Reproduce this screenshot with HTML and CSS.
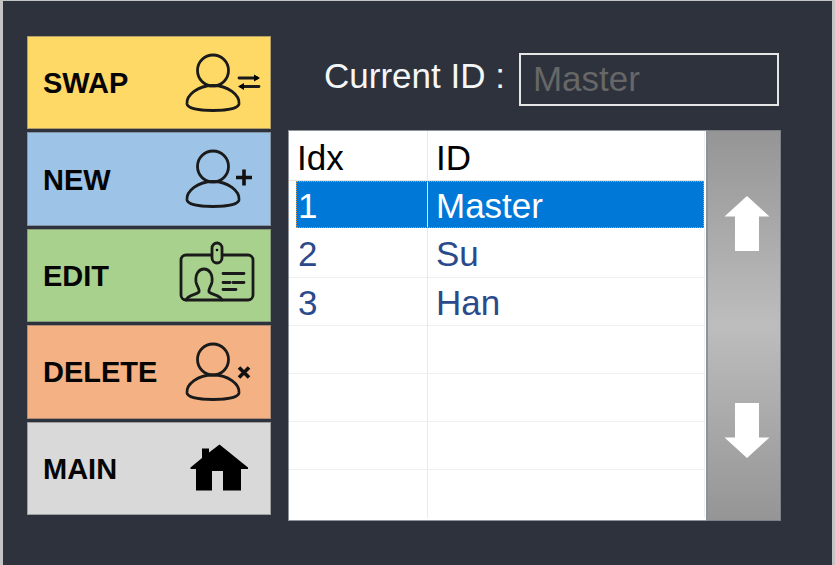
FILE: index.html
```html
<!DOCTYPE html>
<html lang="en">
<head>
<meta charset="utf-8">
<title>User ID</title>
<link rel="stylesheet" href="styles.css">
</head>
<body>
<div class="window">
  <nav class="menu">
    <button class="btn swap"><span>SWAP</span>
      <svg class="icon" viewBox="0 0 84 70"><circle class="ln" cx="36" cy="22.500" r="15.500"/><path class="ln" d="M36 37.500C51 37.500 63 47 62 56C61 61 47 62.500 36 62.500C25 62.500 11 61 10 56C9 47 21 37.500 36 37.500Z"/><path class="ln" d="M62 30H80M64 38.500H82"/><path class="fill" d="M77 26.500L83 30L77 33.500ZM67 35L61 38.500L67 42Z"/></svg>
    </button>
    <button class="btn new"><span>NEW</span>
      <svg class="icon" viewBox="0 0 84 70"><circle class="ln" cx="36" cy="22.500" r="15.500"/><path class="ln" d="M36 37.500C51 37.500 63 47 62 56C61 61 47 62.500 36 62.500C25 62.500 11 61 10 56C9 47 21 37.500 36 37.500Z"/><path class="heavy" d="M59 33.500H75M67 25.500V41.500"/></svg>
    </button>
    <button class="btn edit"><span>EDIT</span>
      <svg class="icon" viewBox="0 0 84 70"><rect class="ln" x="4" y="15" width="72" height="45" rx="5"/><rect class="ln bg-edit" x="35" y="3" width="10" height="20" rx="5"/><circle class="fill" cx="40" cy="10" r="1.300"/><path class="ln" d="M9 60C11 55 19 55 22 52C23 49 20 47 19 42C18 34 22 29 27 29C32 29 36 34 35 42C34 47 31 49 32 52C35 55 43 55 45 60"/><path class="ln" d="M46 33.500H67M46 42.500H53M56 42.500H67M46 49.500H59"/></svg>
    </button>
    <button class="btn del"><span>DELETE</span>
      <svg class="icon" viewBox="0 0 84 70"><circle class="ln" cx="36" cy="22.500" r="15.500"/><path class="ln" d="M36 38C51 38 63 47 62 56C61 61 47 62.500 36 62.500C25 62.500 11 61 10 56C9 47 21 38 36 38Z"/><path class="heavy" d="M62 30.500L72 40.500M72 30.500L62 40.500"/></svg>
    </button>
    <button class="btn main"><span>MAIN</span>
      <svg class="icon" viewBox="0 0 84 70"><path class="fill" d="M42.500 11.500L71 34.500V36H64V57.500H46V38H35V57.500H19V36H13.500V34.500L25 25V15.500H32V19.500Z"/></svg>
    </button>
  </nav>
  <main class="content">
    <div class="current">
      <label class="current-label">Current ID :</label>
      <div class="current-box">Master</div>
    </div>
    <div class="list">
      <div class="grid">
        <div class="row head"><div class="cell idx">Idx</div><div class="cell">ID</div></div>
        <div class="row selected"><div class="cell idx">1</div><div class="cell">Master</div></div>
        <div class="row second"><div class="cell idx">2</div><div class="cell">Su</div></div>
        <div class="row"><div class="cell idx">3</div><div class="cell">Han</div></div>
        <div class="row"><div class="cell idx"></div><div class="cell"></div></div>
        <div class="row"><div class="cell idx"></div><div class="cell"></div></div>
        <div class="row"><div class="cell idx"></div><div class="cell"></div></div>
        <div class="row last"><div class="cell idx"></div><div class="cell"></div></div>
      </div>
      <div class="scroll">
        <svg class="arrow" viewBox="0 0 46 56"><path d="M23 0L45.500 20.500H35V55H11V20.500H0.500Z"/></svg>
        <svg class="arrow" viewBox="0 0 46 56"><path d="M23 56L45.500 35.500H35V1H11V35.500H0.500Z"/></svg>
      </div>
    </div>
  </main>
</div>
</body>
</html>
```
FILE: styles.css
```css
* { box-sizing: border-box; }
html, body { margin: 0; height: 100%; }
body {
  background: #c4c4c4;
  padding: 1px 3px 0 3px;
  font-family: "Liberation Sans", Arial, sans-serif;
  overflow: hidden;
}
.window {
  height: 564px;
  background: #2e323d;
  display: flex;
  padding: 35px 0 0 24px;
}
.menu {
  width: 244px;
  height: 479px;
  display: grid;
  grid-template-rows: repeat(5, 1fr);
  row-gap: 3px;
}
.btn {
  display: flex;
  align-items: center;
  justify-content: space-between;
  padding: 0 9px 0 15px;
  border: 1px solid rgba(110, 110, 110, 0.55);
  font: bold 29px "Liberation Sans", Arial, sans-serif;
  color: #050505;
  text-align: left;
}
.btn span { position: relative; top: 1px; }
.swap { background: #ffd966; }
.new { background: #9dc3e6; }
.edit { background: #a9d18e; }
.del { background: #f4b183; }
.main { background: #d9d9d9; }
.icon { width: 84px; height: 70px; flex: none; }
.ln { fill: none; stroke: #1a1a1a; stroke-width: 2.800; stroke-linecap: round; stroke-linejoin: round; }
.heavy { fill: none; stroke: #111; stroke-width: 3.600; }
.fill { fill: #000; }
.bg-edit { fill: #a9d18e; }
.content {
  margin-left: 17px;
  width: 493px;
  display: flex;
  flex-direction: column;
}
.current {
  display: flex;
  align-items: center;
  height: 53px;
  margin-top: 17px;
  padding-left: 36px;
  gap: 14px;
  font-size: 35px;
  color: #f4f6f8;
}
.current-label { position: relative; top: -4px; }
.current-box {
  width: 260px;
  height: 53px;
  border: 2px solid #e6e6e6;
  padding-left: 12px;
  line-height: 47px;
  color: #666766;
}
.list {
  display: flex;
  height: 391px;
  margin-top: 24px;
}
.grid {
  width: 419px;
  background: #fff;
  border: 1px solid #8f939b;
  border-right: 0;
  font-size: 35px;
  color: #2b4a8b;
  display: flex;
  flex-direction: column;
}
.row {
  display: grid;
  grid-template-columns: 139px 1fr;
  height: 48px;
  line-height: 49px;
  border-bottom: 1px solid #efefef;
  border-right: 1px solid #efefef;
  margin-right: 2px;
}
.head {
  height: 50px;
  color: #000;
  line-height: 53px;
  border-bottom: 1px solid #e4e4e4;
}
.head .idx { padding-left: 8px; }
.second { height: 50px; line-height: 51px; }
.last { height: 48px; border-bottom: 0; }
.cell { padding-left: 8px; }
.idx { padding-left: 9px; border-right: 1px solid #e9e9e9; }
.selected {
  height: 47px;
  margin-left: 7px;
  margin-right: 3px;
  grid-template-columns: 132px 1fr;
  background: #0078d7;
  color: #fff;
  line-height: 49px;
  outline: 1px dotted #d99a50;
  outline-offset: -1px;
  border: 0;
}
.selected .idx { padding-left: 2px; border-right: 1px solid #d9e6f2; }
.scroll {
  width: 75px;
  border: 1px solid #7d8087;
  border-left: 2px solid #8e939b;
  margin-left: -1px;
  background: linear-gradient(#959595, #bdbdbd 50%, #959595);
  display: flex;
  flex-direction: column;
  justify-content: space-between;
  align-items: center;
  padding: 65px 0 62px 6px;
}
.arrow { width: 46px; height: 56px; fill: #fff; }
```
